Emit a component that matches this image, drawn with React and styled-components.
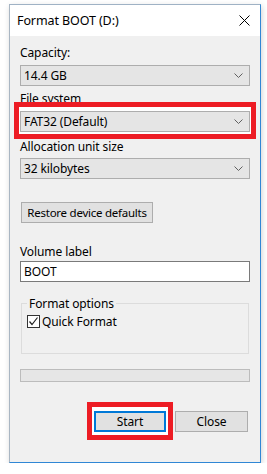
import React from 'react'
import styled, { createGlobalStyle } from "styled-components"

const Global = createGlobalStyle`
  body {
    margin: 0;
    background: #fff;
    font-family: "Noto Sans", "Open Sans", sans-serif;
  }
`;

const Window = styled.div`
  width: 250px;
  margin: 4px 0 0 9px;
  border: 1px solid;
  border-color: #9fb2c5 #3087d5 #3087d5 #a9b6c3;
  box-shadow: 1px 2px 6px rgba(0, 0, 0, 0.18);
  background: #f0f0f0;
  color: #000;
  font-size: 12px;
  letter-spacing: -0.1px;
`;

const TitleBar = styled.div`
  height: 31px;
  background: #fff;
  display: flex;
  align-items: center;
  justify-content: space-between;
  padding: 0 10px 0 7px;
  font-size: 12.5px;
`;

const Body = styled.div`
  padding: 9px 10px 30px 10px;
  display: flex;
  flex-direction: column;
`;

const Label = styled.div`
  height: 16px;
  line-height: 16px;
  white-space: nowrap;
  margin-top: ${p => p.top || 0}px;
  margin-bottom: ${p => p.bottom || 4}px;
`;

const Combo = styled.div`
  height: 21px;
  box-sizing: border-box;
  border: 1px solid #adadad;
  background: #e5e5e5;
  display: flex;
  align-items: center;
  justify-content: space-between;
  padding: 0 6px 0 3px;
`;

const Highlight = styled.div`
  position: relative;
  z-index: 0;
  &::before {
    content: "";
    position: absolute;
    inset: ${p => p.inset};
    border: 5px solid #ed1c24;
    background: #fff;
    z-index: -1;
  }
`;

const Button = styled.button`
  height: 21px;
  box-sizing: border-box;
  border: ${p => (p.focused ? "2px solid #0078d7" : "1px solid #adadad")};
  background: #e1e1e1;
  font: inherit;
  letter-spacing: inherit;
  color: #000;
  padding: 0;
  width: ${p => p.w}px;
  white-space: nowrap;
  display: block;
`;

const RestoreButton = styled(Button)`
  margin: 23px 0 0 1px;
  font-size: 11.5px;
  letter-spacing: -0.25px;
`;

const TextInput = styled.div`
  height: 21px;
  box-sizing: border-box;
  border: 1px solid #7a7a7a;
  background: #fff;
  display: flex;
  align-items: center;
  padding: 0 3px;
`;

const Group = styled.fieldset`
  margin: 13px 1px 0 1px;
  padding: 1px 5px 0 5px;
  height: 59px;
  box-sizing: border-box;
  border: 1px solid #dcdcdc;
  min-width: 0;
`;

const Legend = styled.legend`
  padding: 0 2px;
  margin-left: 0;
  font-size: 12px;
`;

const CheckRow = styled.label`
  display: flex;
  align-items: center;
  gap: 2px;
`;

const Box = styled.span`
  width: 13px;
  height: 13px;
  box-sizing: border-box;
  border: 1px solid #333;
  background: #fff;
  display: flex;
  align-items: center;
  justify-content: center;
`;

const Progress = styled.div`
  margin-top: 15px;
  height: 13px;
  box-sizing: border-box;
  border: 1px solid #bcbcbc;
  background: #e6e6e6;
`;

const ButtonRow = styled.div`
  margin-top: 29px;
  padding-right: 2px;
  display: flex;
  justify-content: flex-end;
  gap: 9px;
`;

const Chevron = () => (
  <svg width="9" height="5" viewBox="0 0 9 5">
    <path d="M0.5 0.5 L4.5 4.5 L8.5 0.5" fill="none" stroke="#606060" strokeWidth="1" />
  </svg>
);

const CloseIcon = () => (
  <svg width="11" height="11" viewBox="0 0 11 11">
    <path d="M0.5 0.5 L10.5 10.5 M10.5 0.5 L0.5 10.5" stroke="#000" strokeWidth="1" />
  </svg>
);

const Check = () => (
  <svg width="11" height="11" viewBox="0 0 11 11">
    <path d="M1.5 5.5 L4 8.5 L9.5 1.5" fill="none" stroke="#222" strokeWidth="1.2" />
  </svg>
);

function Select({ value }) {
  return (
    <Combo>
      <span>{value}</span>
      <Chevron />
    </Combo>
  );
}

export default function App() {
  return (
    <>
      <Global />
      <Window>
        <TitleBar>
          <span>Format BOOT (D:)</span>
          <CloseIcon />
        </TitleBar>
        <Body>
          <Label>Capacity:</Label>
          <Select value="14.4 GB" />

          <Label top={5}>File system</Label>
          <Highlight inset="-9px -6px -7px -6px">
            <Select value="FAT32 (Default)" />
          </Highlight>

          <Label top={7} bottom={3}>Allocation unit size</Label>
          <Select value="32 kilobytes" />

          <RestoreButton w={132}>Restore device defaults</RestoreButton>

          <Label top={21} bottom={1}>Volume label</Label>
          <TextInput>BOOT</TextInput>

          <Group>
            <Legend>Format options</Legend>
            <CheckRow>
              <Box><Check /></Box>
              Quick Format
            </CheckRow>
          </Group>

          <Progress />

          <ButtonRow>
            <Highlight inset="-9px -7px -8px -7px">
              <Button w={72} focused>Start</Button>
            </Highlight>
            <Button w={73}>Close</Button>
          </ButtonRow>
        </Body>
      </Window>
    </>
  );
}
